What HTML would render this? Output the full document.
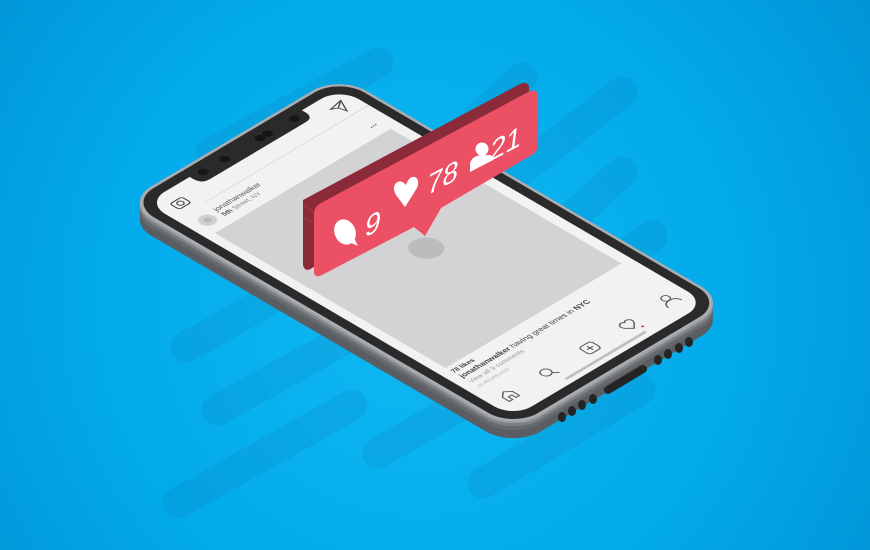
<!DOCTYPE html>
<html><head><meta charset="utf-8"><style>
html,body{margin:0;padding:0;width:870px;height:550px;overflow:hidden;}
svg{display:block;font-family:"Liberation Sans",sans-serif;}
</style></head><body>
<svg width="870" height="550" viewBox="0 0 870 550" xmlns="http://www.w3.org/2000/svg">
<defs>
<radialGradient id="bg" cx="420" cy="300" r="560" gradientUnits="userSpaceOnUse">
<stop offset="0" stop-color="#10b9f3"/><stop offset="0.6" stop-color="#02a9ea"/><stop offset="1" stop-color="#0092d4"/>
</radialGradient>
</defs>
<rect width="870" height="550" fill="url(#bg)"/>
<g stroke="#0b6aa0" stroke-opacity="0.14" stroke-width="31" stroke-linecap="round" fill="none">
<line x1="211" y1="153" x2="378" y2="63"/>
<line x1="380" y1="210" x2="522" y2="78"/>
<line x1="450" y1="225" x2="622" y2="92"/>
<line x1="480" y1="300" x2="622" y2="172"/>
<line x1="520" y1="330" x2="652" y2="236"/>
<line x1="186" y1="347" x2="340" y2="260"/>
<line x1="217" y1="410" x2="380" y2="320"/>
<line x1="178" y1="503" x2="352" y2="405"/>
<line x1="378" y1="453" x2="470" y2="400"/>
<line x1="483" y1="483" x2="640" y2="390"/>
</g>

<!-- phone side thickness -->
<g fill="#5a5d61">
<rect transform="translate(0,17) matrix(0.8377,-0.4974,0.8639,0.5052,129,202.7)" x="-3" y="-3" width="257" height="451" rx="32"/>
<rect transform="translate(0,13) matrix(0.8377,-0.4974,0.8639,0.5052,129,202.7)" x="-3" y="-3" width="257" height="451" rx="32"/>
<rect transform="translate(0,9) matrix(0.8377,-0.4974,0.8639,0.5052,129,202.7)" x="-3" y="-3" width="257" height="451" rx="32" fill="#66696d"/>
<rect transform="translate(0,5) matrix(0.8377,-0.4974,0.8639,0.5052,129,202.7)" x="-3" y="-3" width="257" height="451" rx="32" fill="#7d8185"/>
<rect transform="translate(0,2) matrix(0.8377,-0.4974,0.8639,0.5052,129,202.7)" x="-3" y="-3" width="257" height="451" rx="32" fill="#9a9ea2"/>
</g>
<!-- side details -->
<g fill="#252525">
<ellipse cx="562" cy="417" rx="4" ry="5"/><ellipse cx="572" cy="411" rx="4" ry="5"/><ellipse cx="582" cy="405" rx="4" ry="5"/><ellipse cx="593" cy="399" rx="4" ry="5"/>
<line x1="608" y1="390" x2="643" y2="369" stroke="#252525" stroke-width="8" stroke-linecap="round"/>
<ellipse cx="658" cy="360" rx="4" ry="5"/><ellipse cx="668" cy="354" rx="4" ry="5"/><ellipse cx="679" cy="348" rx="4" ry="5"/><ellipse cx="689" cy="342" rx="4" ry="5"/>
</g>

<!-- phone top surface -->
<g transform="matrix(0.8377,-0.4974,0.8639,0.5052,129,202.7)">
<rect x="-3" y="-3" width="257" height="451" rx="32" fill="#a9adb1"/>
<rect x="0" y="0" width="251" height="445" rx="29" fill="#2a2a2a"/>
<rect x="10" y="10" width="231" height="425" rx="22" fill="#f2f2f2"/>
<path d="M62 8 H196 V14 Q196 24 186 24 H72 Q62 24 62 14 Z" fill="#2a2a2a"/>
<g fill="#151515"><circle cx="75" cy="13" r="4.5"/><circle cx="101" cy="13" r="4.5"/><circle cx="143" cy="13" r="4.5"/><circle cx="152" cy="13" r="4.5"/><circle cx="183" cy="14" r="4.5"/></g>
<g fill="none" stroke="#444" stroke-width="1.2">
<rect x="23" y="25" width="14" height="11" rx="2.5"/><circle cx="30" cy="30.5" r="3"/>
<path d="M214 26 L229 23 L222 37 L220 29 Z M220 29 L229 23"/>
</g>
<line x1="46" y1="44" x2="241" y2="44" stroke="#d2d2d2" stroke-width="0.8"/>
<circle cx="29" cy="63" r="8" fill="#cfcfcf" stroke="#e2e2e2" stroke-width="1"/>
<circle cx="29" cy="63" r="3.5" fill="#b8b8b8"/>
<text x="43" y="60" font-size="8" fill="#555">jonathanwalker</text>
<text x="43" y="69" font-size="7" fill="#888"><tspan font-weight="bold" fill="#555">5th</tspan> Street, NY</text>
<text x="219" y="68" font-size="9" font-weight="bold" fill="#555">...</text>
<rect x="20" y="80" width="210" height="267" fill="#d3d3d5"/>
<circle cx="130" cy="218" r="15" fill="#bcbcbe"/>
<text x="20" y="357" font-size="7" font-weight="bold" fill="#444">78 likes</text>
<text x="20" y="367" font-size="8" fill="#444"><tspan font-weight="bold">jonathanwalker</tspan> having great times in <tspan font-weight="bold">NYC</tspan></text>
<text x="20" y="377" font-size="7" fill="#9a9a9a">View all 9 comments</text>
<text x="20" y="386" font-size="5" fill="#aaa">12 HOURS AGO</text>
<g fill="none" stroke="#555" stroke-width="1.2">
<path d="M24 417 V409 L30 404 L36 409 V417 H32 V412 H28 V417 Z"/>
<circle cx="75" cy="410" r="5"/><line x1="79" y1="414" x2="83" y2="418"/>
<rect x="119" y="405" width="14" height="13" rx="3"/><line x1="126" y1="408" x2="126" y2="415"/><line x1="122.5" y1="411.5" x2="129.5" y2="411.5"/>
<path d="M172 418 L166 412 Q164 408 167 406 Q170 404 172 407 Q174 404 177 406 Q180 408 178 412 Z"/>
<circle cx="221" cy="407" r="4"/><path d="M213 418 Q214 411 221 411 Q228 411 229 418"/>
</g>
<circle cx="179" cy="421" r="1.3" fill="#e0445a"/>
<line x1="81" y1="428" x2="174" y2="428" stroke="#bdbdbd" stroke-width="3" stroke-linecap="round"/>
</g>

<!-- badge -->
<path d="M303 200 L520 84 Q526 81 529 86 L530 146 L428 204 L411 226 L412 210 L312 268 Q305 273 303 265 Z" fill="#8b2b3a"/>
<path d="M314 214 Q314 207 321 203 L528 92 Q538 87 538 98 L538 144 Q538 152 530 156 L441 208 L425 236 L414 227 L322 275 Q314 279 314 271 Z" fill="#ec5064"/>
<path d="M304 206 L314 212 M304 218 L314 222" stroke="#a33a4a" stroke-width="0.8"/>
<g fill="#fff">
<ellipse cx="345" cy="232" rx="10.5" ry="13" transform="rotate(-22 345 232)"/>
<path d="M349 242 L358 246 L353 236 Z"/>
<path d="M405 207 L396 195 Q392 188 396 183 Q401 179 406 185 Q409 176 415 177 Q420 180 417 188 Z"/>
<circle cx="482" cy="149" r="6.5"/>
<path d="M470 172 L470 164 Q471 157 480 155 L486 155 Q493 154 493 159 L493 160 Z"/>
</g>
<g fill="#fff" font-size="28">
<text transform="translate(364,238) skewY(-28) skewX(-8)">9</text>
<text transform="translate(426,196) skewY(-28) skewX(-8)">78</text>
<text transform="translate(489,162) skewY(-28) skewX(-8)">21</text>
</g>
</svg>
</body></html>
